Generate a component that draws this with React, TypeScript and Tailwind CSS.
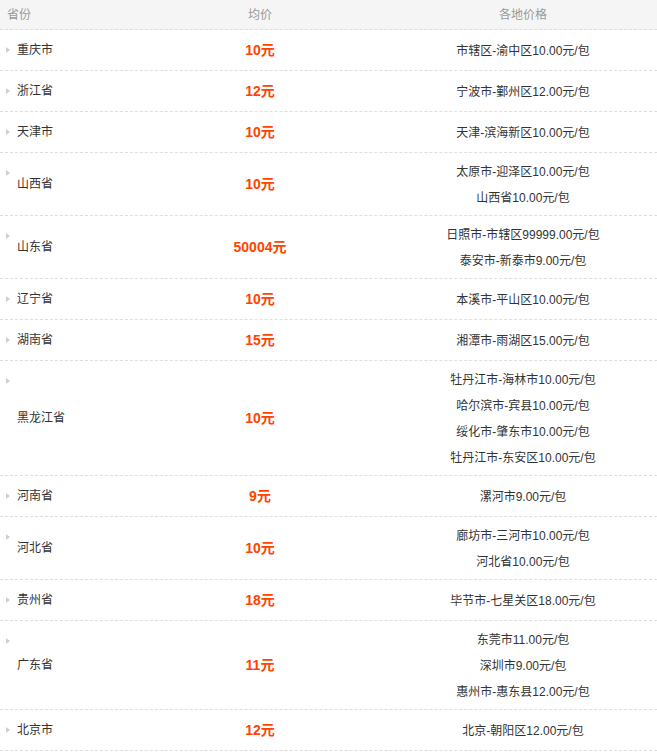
import React from "react";

type Row = { name: string; avg: string; items: string[] };

const rows: Row[] = [
  { name: "重庆市", avg: "10元", items: ["市辖区-渝中区10.00元/包"] },
  { name: "浙江省", avg: "12元", items: ["宁波市-鄞州区12.00元/包"] },
  { name: "天津市", avg: "10元", items: ["天津-滨海新区10.00元/包"] },
  { name: "山西省", avg: "10元", items: ["太原市-迎泽区10.00元/包", "山西省10.00元/包"] },
  { name: "山东省", avg: "50004元", items: ["日照市-市辖区99999.00元/包", "泰安市-新泰市9.00元/包"] },
  { name: "辽宁省", avg: "10元", items: ["本溪市-平山区10.00元/包"] },
  { name: "湖南省", avg: "15元", items: ["湘潭市-雨湖区15.00元/包"] },
  {
    name: "黑龙江省",
    avg: "10元",
    items: [
      "牡丹江市-海林市10.00元/包",
      "哈尔滨市-宾县10.00元/包",
      "绥化市-肇东市10.00元/包",
      "牡丹江市-东安区10.00元/包",
    ],
  },
  { name: "河南省", avg: "9元", items: ["漯河市9.00元/包"] },
  { name: "河北省", avg: "10元", items: ["廊坊市-三河市10.00元/包", "河北省10.00元/包"] },
  { name: "贵州省", avg: "18元", items: ["毕节市-七星关区18.00元/包"] },
  { name: "广东省", avg: "11元", items: ["东莞市11.00元/包", "深圳市9.00元/包", "惠州市-惠东县12.00元/包"] },
  { name: "北京市", avg: "12元", items: ["北京-朝阳区12.00元/包"] },
];

const font = { fontFamily: '"Liberation Sans", "Noto Sans CJK SC", sans-serif' };

export default function App() {
  return (
    <div className="w-[657px] bg-white text-[12px] text-[#333]" style={font}>
      <div className="grid h-[30px] grid-cols-[131px_258px_1fr] items-center border-b border-dashed border-[#dedede] bg-[#f5f5f5] text-[#999]">
        <div className="pl-[7px]">省份</div>
        <div className="text-center">均价</div>
        <div className="text-center">各地价格</div>
      </div>
      {rows.map((r) => (
        <div
          key={r.name}
          className="grid grid-cols-[131px_258px_1fr] border-b border-dashed border-[#dedede]"
        >
          <div className="flex">
            <div className="ml-[6px] mt-[17px] h-0 w-0 self-start border-y-[3px] border-l-[4px] border-y-transparent border-l-[#cfcfcf]" />
            <div className="ml-[7px] self-center">{r.name}</div>
          </div>
          <div className="flex items-center justify-center text-[14px] font-bold text-[#ff4400]">
            {r.avg}
          </div>
          <div className="flex min-h-[40px] flex-col justify-center pt-[6px] pb-[4px] text-center">
            {r.items.map((it) => (
              <div key={it} className="leading-[26px]">
                {it}
              </div>
            ))}
          </div>
        </div>
      ))}
    </div>
  );
}
